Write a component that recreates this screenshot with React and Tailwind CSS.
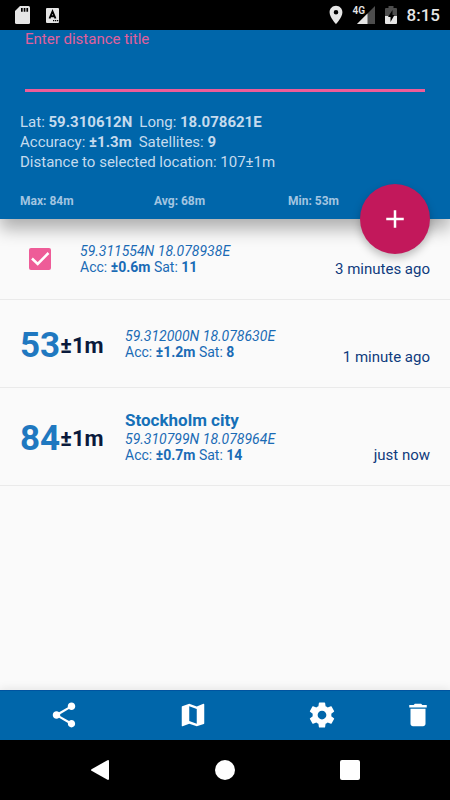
import React from 'react';
import { MdAdd, MdDelete, MdLocationOn, MdMap, MdShare } from 'react-icons/md';

const points = [
  { id: 1, selected: true, lat: '59.311554N', long: '18.078938E', acc: '±0.6m', sat: 11, time: '3 minutes ago' },
  { id: 2, distance: 53, error: '±1m', lat: '59.312000N', long: '18.078630E', acc: '±1.2m', sat: 8, time: '1 minute ago' },
  { id: 3, distance: 84, error: '±1m', title: 'Stockholm city', lat: '59.310799N', long: '18.078964E', acc: '±0.7m', sat: 14, time: 'just now' },
];

const StatusBar = () => (
  <div className="flex h-[30px] items-center bg-black pl-[15px] pr-[10px] text-[#e6e6e6]">
    <svg className="h-[18px] w-[15px]" viewBox="0 0 15 18" fill="currentColor">
      <path d="M5 0h8.500q1.500 0 1.500 1.500v15q0 1.500-1.500 1.500h-12q-1.500 0-1.500-1.500V5z" />
      <path d="M6 2h1.700v3.700H6zM8.700 2h1.700v3.700H8.700zM11.400 2h1.700v3.700h-1.700z" fill="#000" />
    </svg>
    <svg className="ml-4 h-[15px] w-[13px]" viewBox="0 0 13 15">
      <rect width="13" height="15" rx="1" fill="currentColor" />
      <path d="M3.500 10.500L6.500 3.500L9.500 10.500M4.600 8.300h3.800" fill="none" stroke="#000" strokeWidth="1.900" />
      <path d="M7 12h1.300v1.200H7zM9 12h1.300v1.200H9zM11 12h1.300v1.200H11z" fill="#000" />
    </svg>
    <div className="ml-auto flex items-center">
      <MdLocationOn size={22} />
      <div className="relative ml-[10px] h-[18px] w-[18px]">
        <svg className="h-[18px] w-[18px]" viewBox="0 0 18 18">
          <path d="M18 0v18H0z" fill="#4d4d4d" />
          <path d="M10.500 7.500V18H0z" fill="currentColor" />
        </svg>
        <span className="absolute -left-1 top-0 bg-black text-[10px] leading-[9px] font-semibold">4G</span>
      </div>
      <svg className="ml-[10px] h-[18px] w-3" viewBox="0 0 12 18">
        <path d="M3.500 0h5v2H11q1 0 1 1v7H0V3q0-1 1-1h2.500z" fill="#4d4d4d" />
        <path d="M0 10h12v7q0 1-1 1H1q-1 0-1-1z" fill="currentColor" />
        <path d="M7.500 4L3 11h2.500v5L9.500 9H7.500z" fill="#000" />
      </svg>
      <span className="ml-[10px] text-[17px] leading-[18px] font-medium">8:15</span>
    </div>
  </div>
);

const Header = () => (
  <header className="relative z-10 bg-[#0066aa] text-[#c5dbee] shadow-[0_10px_16px_rgba(0,0,0,0.3)]">
    <div className="flex flex-col px-[25px]">
      <label htmlFor="title" className="text-[15px] leading-[18px] text-[#e0609c]">
        Enter distance title
      </label>
      <input
        id="title"
        type="text"
        className="h-11 w-full border-b-[3px] border-[#ee5c98] bg-transparent text-lg text-white outline-none"
      />
    </div>
    <div className="mt-5 px-5 text-[15px] leading-[20px]">
      <p className="flex gap-[7px]">
        <span>Lat: <b>59.310612N</b></span>
        <span>Long: <b>18.078621E</b></span>
      </p>
      <p className="flex gap-[7px]">
        <span>Accuracy: <b>±1.3m</b></span>
        <span>Satellites: <b>9</b></span>
      </p>
      <p>Distance to selected location: 107±1m</p>
    </div>
    <div className="mt-[21px] flex pb-[10px] pl-5 pr-7 text-[12px] leading-[16px] font-bold text-[#a3c5e1]">
      <span className="flex-1">Max: 84m</span>
      <span className="flex-1">Avg: 68m</span>
      <span className="flex-1">Min: 53m</span>
    </div>
    <button
      type="button"
      aria-label="Add"
      className="absolute right-5 -bottom-[35px] flex h-[70px] w-[70px] items-center justify-center rounded-full bg-[#c2185b] text-white shadow-[0_4px_8px_rgba(0,0,0,0.25)]"
    >
      <MdAdd size={30} />
    </button>
  </header>
);

const PointRow = ({ point }) => (
  <li className="flex items-center border-b border-[#eaeaea] px-5 py-[22px] text-[#1a6bb5]">
    {point.distance ? (
      <div className="flex w-[105px] items-center pt-1 font-bold">
        <span className="text-[35px] leading-[39px] text-[#1f78c0]">{point.distance}</span>
        <span className="text-[22px] leading-[39px] text-[#0a1a3c]">{point.error}</span>
      </div>
    ) : (
      <label className="relative flex h-9 w-[60px] items-center pl-[9px]">
        <input
          type="checkbox"
          defaultChecked={point.selected}
          aria-label="Select location"
          className="peer h-[22px] w-[22px] appearance-none rounded-[2px] border-2 border-[#ee5c98] checked:bg-[#ee5c98]"
        />
        <svg className="pointer-events-none absolute left-[9px] hidden h-[22px] w-[22px] peer-checked:block" viewBox="0 0 22 22">
          <path d="M3 10.500L8.700 16L19.500 5" fill="none" stroke="#fff" strokeWidth="2.500" />
        </svg>
      </label>
    )}
    <div className="text-[14px] leading-[16px]">
      {point.title && <h2 className="text-[17px] leading-[21px] font-bold text-[#1570b8]">{point.title}</h2>}
      <p className="italic">{point.lat} {point.long}</p>
      <p>Acc: <b>{point.acc}</b> Sat: <b>{point.sat}</b></p>
    </div>
    <time className="ml-auto -mb-px self-end text-[15px] leading-[18px] text-[#0f3a7d]">{point.time}</time>
  </li>
);

const GearIcon = () => (
  <svg className="h-[30px] w-[30px]" viewBox="0 0 24 24" fill="currentColor">
    <path d="M19.430 12.980c.04-.32.07-.64.07-.98s-.03-.66-.07-.98l2.110-1.650c.19-.15.24-.42.12-.64l-2-3.460c-.12-.22-.39-.3-.61-.22l-2.490 1c-.52-.4-1.080-.73-1.690-.98l-.38-2.650C14.460 2.180 14.250 2 14 2h-4c-.25 0-.46.18-.49.42l-.38 2.650c-.61.25-1.170.59-1.690.98l-2.490-1c-.23-.09-.49 0-.61.22l-2 3.460c-.13.22-.07.49.12.64l2.110 1.650c-.04.32-.07.65-.07.98s.03.66.07.98l-2.110 1.650c-.19.15-.24.42-.12.64l2 3.460c.12.22.39.3.61.22l2.490-1c.52.4 1.080.73 1.690.98l.38 2.650c.03.24.24.42.49.42h4c.25 0 .46-.18.49-.42l.38-2.650c.61-.25 1.170-.59 1.690-.98l2.490 1c.23.09.49 0 .61-.22l2-3.460c.12-.22.07-.49-.12-.64l-2.110-1.650zM12 15.500c-1.930 0-3.500-1.570-3.500-3.500s1.570-3.500 3.500-3.500 3.500 1.570 3.500 3.500-1.570 3.500-3.500 3.500z" />
  </svg>
);

const Toolbar = () => (
  <nav className="relative flex h-[50px] items-center bg-[#0066aa] text-white shadow-[0_-2px_8px_rgba(0,0,0,0.08),inset_0_1px_0_#0054a0]">
    <button type="button" aria-label="Share" className="flex flex-1 justify-center"><MdShare size={30} /></button>
    <button type="button" aria-label="Map" className="flex flex-1 justify-center"><MdMap size={30} /></button>
    <button type="button" aria-label="Settings" className="flex flex-1 justify-center"><GearIcon /></button>
    <button type="button" aria-label="Delete" className="flex w-16 justify-center"><MdDelete size={30} /></button>
  </nav>
);

const SystemNav = () => (
  <div className="h-[60px] bg-black">
    <div className="mx-auto flex h-full w-5/6 items-center text-white">
      <button type="button" aria-label="Back" className="flex flex-1 justify-center">
        <svg className="h-5 w-5" viewBox="0 0 20 20" fill="currentColor">
          <path d="M1.500 9.200L17.500 .2q1.500-.6 1.500 1v17.600q0 1.600-1.500 1L1.500 10.800q-1-.8 0-1.600z" />
        </svg>
      </button>
      <button type="button" aria-label="Home" className="flex flex-1 justify-center">
        <span className="h-5 w-5 rounded-full bg-white" />
      </button>
      <button type="button" aria-label="Recent apps" className="flex flex-1 justify-center">
        <span className="h-5 w-5 rounded-[2px] bg-white" />
      </button>
    </div>
  </div>
);

const App = () => (
  <div className="flex min-h-screen flex-col bg-[#fafafa] font-[Roboto,sans-serif]">
    <StatusBar />
    <Header />
    <ul className="flex-1">
      {points.map((point) => (
        <PointRow key={point.id} point={point} />
      ))}
    </ul>
    <Toolbar />
    <SystemNav />
  </div>
);

export default App;
